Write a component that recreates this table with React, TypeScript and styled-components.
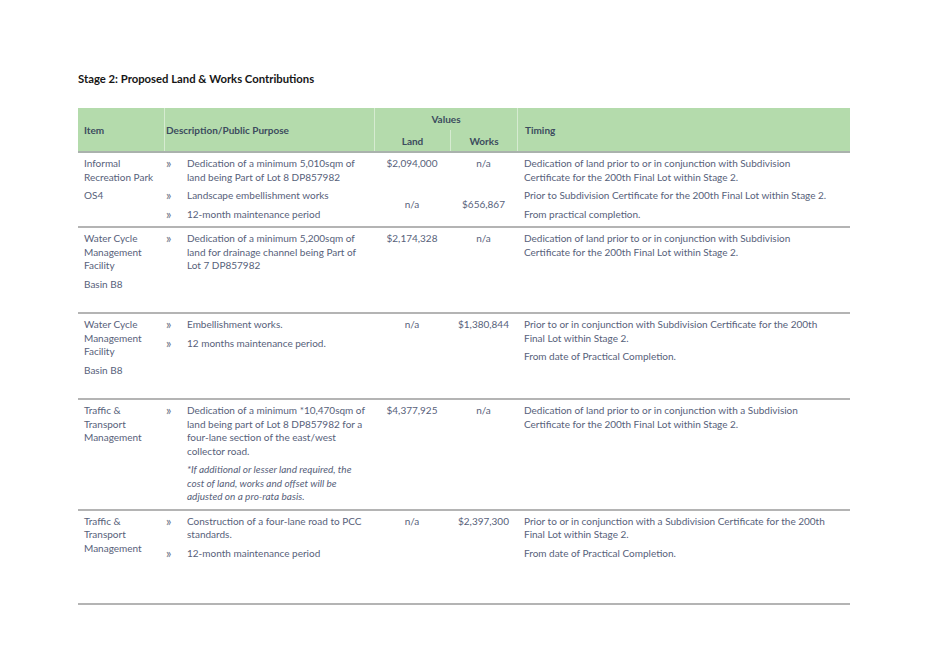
import React from 'react'
import styled, { createGlobalStyle } from 'styled-components'

const GlobalStyle = createGlobalStyle`
  html, body {
    margin: 0;
    background: #ffffff;
  }
  body {
    font-family: Lato, "Noto Sans", sans-serif;
  }
`

// column widths: item | description | land | works | timing
const COLS = '86px 210px 76px 67px 1fr'

const Page = styled.div`
  width: 772px;
  padding: 72px 0 0 78px;
`

const Title = styled.h1`
  margin: 0 0 22px;
  font-size: 11.3px;
  line-height: 14px;
  font-weight: 700;
  color: #161616;
`

const Table = styled.div`
  width: 772px;
`

const HeadRow = styled.div`
  display: grid;
  grid-template-columns: ${COLS};
  grid-template-rows: 22px 21px;
  background: #b4dbac;
  border-bottom: 2px solid #aab2ad;
  color: #3c4c5e;
  font-size: 10px;
  font-weight: 700;
`

const HeadCell = styled.div<{ $col: string; $row: string; $center?: boolean; $pad?: number; $sep?: boolean }>`
  grid-column: ${({ $col }) => $col};
  grid-row: ${({ $row }) => $row};
  display: flex;
  align-items: center;
  justify-content: ${({ $center }) => ($center ? 'center' : 'flex-start')};
  padding-left: ${({ $pad }) => $pad ?? 0}px;
  border-left: ${({ $sep }) => ($sep ? '1px solid rgba(255, 255, 255, 0.45)' : 'none')};
`

const Row = styled.div<{ $h: number }>`
  display: grid;
  grid-template-columns: ${COLS};
  row-gap: 5px;
  align-content: start;
  box-sizing: border-box;
  min-height: ${({ $h }) => $h}px;
  padding: 4px 0 5px;
  border-bottom: 2px solid #b4b4b4;
  color: #57617a;
  font-size: 10px;
  line-height: 13.5px;
  white-space: nowrap;
`

const Cell = styled.div<{ $col: number; $row?: string; $center?: boolean; $pad?: number; $middle?: boolean }>`
  grid-column: ${({ $col }) => $col};
  grid-row: ${({ $row }) => $row ?? '1'};
  display: flex;
  flex-direction: column;
  gap: 5px;
  align-self: ${({ $middle }) => ($middle ? 'center' : 'start')};
  text-align: ${({ $center }) => ($center ? 'center' : 'left')};
  padding-left: ${({ $pad }) => $pad ?? 0}px;
`

const Bullet = styled.div`
  display: flex;
`

const Mark = styled.span`
  flex: 0 0 21px;
  padding-left: 2px;
  font-size: 12.5px;
  line-height: 13.5px;
  color: #6b7385;
`

const Note = styled.div`
  padding-left: 23px;
  font-style: italic;
`

const Lines = ({ t }: { t: string[] }) => (
  <>
    {t.map((s, i) => (
      <React.Fragment key={i}>
        {i > 0 && <br />}
        {s}
      </React.Fragment>
    ))}
  </>
)

const Point = ({ t }: { t: string[] }) => (
  <Bullet>
    <Mark>»</Mark>
    <div>
      <Lines t={t} />
    </div>
  </Bullet>
)

const ITEM_PAD = 6
const TIME_PAD = 7

export default function App() {
  return (
    <>
      <GlobalStyle />
      <Page>
        <Title>Stage 2: Proposed Land &amp; Works Contributions</Title>
        <Table>
          <HeadRow>
            <HeadCell $col="1" $row="1 / 3" $pad={ITEM_PAD}>Item</HeadCell>
            <HeadCell $col="2" $row="1 / 3" $pad={1} $sep>Description/Public Purpose</HeadCell>
            <HeadCell $col="3 / 5" $row="1" $center $sep>Values</HeadCell>
            <HeadCell $col="3" $row="2" $center $sep>Land</HeadCell>
            <HeadCell $col="4" $row="2" $center $sep>Works</HeadCell>
            <HeadCell $col="5" $row="1 / 3" $pad={TIME_PAD} $sep>Timing</HeadCell>
          </HeadRow>

          <Row $h={74}>
            <Cell $col={1} $pad={ITEM_PAD}>
              <div><Lines t={['Informal', 'Recreation Park']} /></div>
            </Cell>
            <Cell $col={1} $row="2" $pad={ITEM_PAD}>
              <div>OS4</div>
            </Cell>
            <Cell $col={2}>
              <Point t={['Dedication of a minimum 5,010sqm of', 'land being Part of Lot 8 DP857982']} />
            </Cell>
            <Cell $col={2} $row="2">
              <Point t={['Landscape embellishment works']} />
            </Cell>
            <Cell $col={2} $row="3">
              <Point t={['12-month maintenance period']} />
            </Cell>
            <Cell $col={3} $center>$2,094,000</Cell>
            <Cell $col={4} $center>n/a</Cell>
            <Cell $col={3} $row="2 / 4" $center $middle>n/a</Cell>
            <Cell $col={4} $row="2 / 4" $center $middle>$656,867</Cell>
            <Cell $col={5} $pad={TIME_PAD}>
              <div>
                <Lines t={['Dedication of land prior to or in conjunction with Subdivision', 'Certificate for the 200th Final Lot within Stage 2.']} />
              </div>
            </Cell>
            <Cell $col={5} $row="2" $pad={TIME_PAD}>
              <div>Prior to Subdivision Certificate for the 200th Final Lot within Stage 2.</div>
            </Cell>
            <Cell $col={5} $row="3" $pad={TIME_PAD}>
              <div>From practical completion.</div>
            </Cell>
          </Row>

          <Row $h={86}>
            <Cell $col={1} $pad={ITEM_PAD}>
              <div><Lines t={['Water Cycle', 'Management', 'Facility']} /></div>
              <div>Basin B8</div>
            </Cell>
            <Cell $col={2}>
              <Point t={['Dedication of a minimum 5,200sqm of', 'land for drainage channel being Part of', 'Lot 7 DP857982']} />
            </Cell>
            <Cell $col={3} $center>$2,174,328</Cell>
            <Cell $col={4} $center>n/a</Cell>
            <Cell $col={5} $pad={TIME_PAD}>
              <div>
                <Lines t={['Dedication of land prior to or in conjunction with Subdivision', 'Certificate for the 200th Final Lot within Stage 2.']} />
              </div>
            </Cell>
          </Row>

          <Row $h={86}>
            <Cell $col={1} $pad={ITEM_PAD}>
              <div><Lines t={['Water Cycle', 'Management', 'Facility']} /></div>
              <div>Basin B8</div>
            </Cell>
            <Cell $col={2}>
              <Point t={['Embellishment works.']} />
              <Point t={['12 months maintenance period.']} />
            </Cell>
            <Cell $col={3} $center>n/a</Cell>
            <Cell $col={4} $center>$1,380,844</Cell>
            <Cell $col={5} $pad={TIME_PAD}>
              <div>
                <Lines t={['Prior to or in conjunction with Subdivision Certificate for the 200th', 'Final Lot within Stage 2.']} />
              </div>
              <div>From date of Practical Completion.</div>
            </Cell>
          </Row>

          <Row $h={109}>
            <Cell $col={1} $pad={ITEM_PAD}>
              <div><Lines t={['Traffic &', 'Transport', 'Management']} /></div>
            </Cell>
            <Cell $col={2}>
              <Point
                t={[
                  'Dedication of a minimum *10,470sqm of',
                  'land being part of Lot 8 DP857982 for a',
                  'four-lane section of the east/west',
                  'collector road.',
                ]}
              />
              <Note>
                <Lines
                  t={[
                    '*If additional or lesser land required, the',
                    'cost of land, works and offset will be',
                    'adjusted on a pro-rata basis.',
                  ]}
                />
              </Note>
            </Cell>
            <Cell $col={3} $center>$4,377,925</Cell>
            <Cell $col={4} $center>n/a</Cell>
            <Cell $col={5} $pad={TIME_PAD}>
              <div>
                <Lines t={['Dedication of land prior to or in conjunction with a Subdivision', 'Certificate for the 200th Final Lot within Stage 2.']} />
              </div>
            </Cell>
          </Row>

          <Row $h={94}>
            <Cell $col={1} $pad={ITEM_PAD}>
              <div><Lines t={['Traffic &', 'Transport', 'Management']} /></div>
            </Cell>
            <Cell $col={2}>
              <Point t={['Construction of a four-lane road to PCC', 'standards.']} />
              <Point t={['12-month maintenance period']} />
            </Cell>
            <Cell $col={3} $center>n/a</Cell>
            <Cell $col={4} $center>$2,397,300</Cell>
            <Cell $col={5} $pad={TIME_PAD}>
              <div>
                <Lines t={['Prior to or in conjunction with a Subdivision Certificate for the 200th', 'Final Lot within Stage 2.']} />
              </div>
              <div>From date of Practical Completion.</div>
            </Cell>
          </Row>
        </Table>
      </Page>
    </>
  )
}
